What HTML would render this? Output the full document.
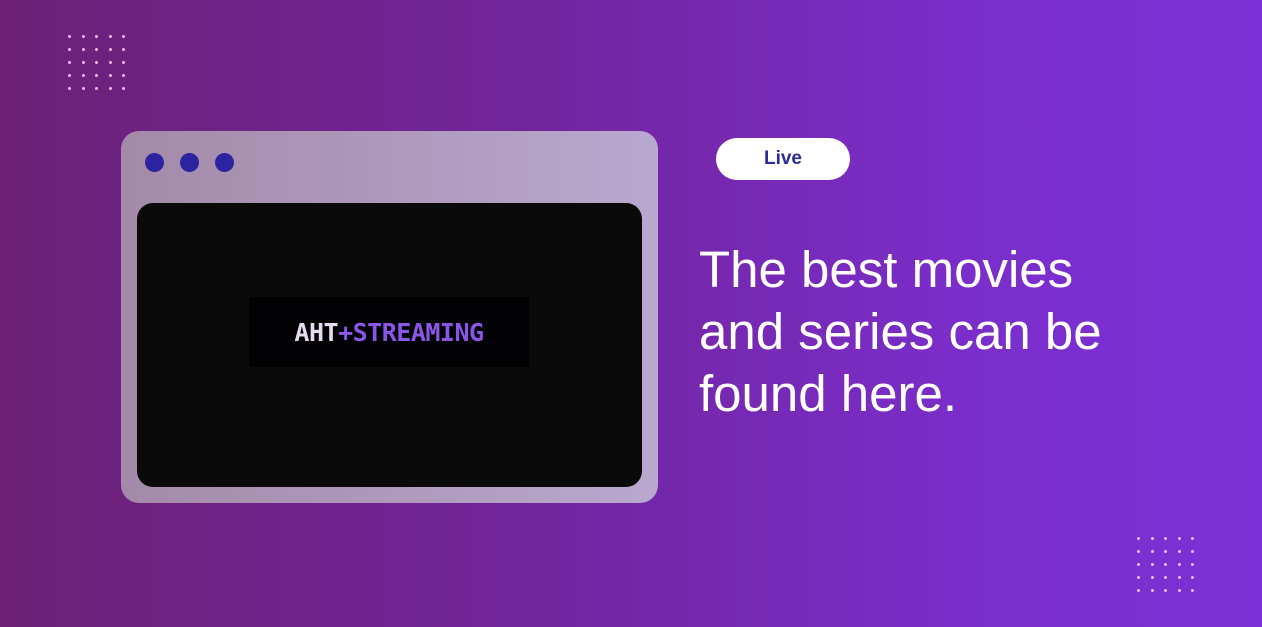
<!DOCTYPE html>
<html><head><meta charset="utf-8"><style>
html,body{margin:0;padding:0}
body{width:1262px;height:627px;overflow:hidden;position:relative;font-family:"Liberation Sans",sans-serif;
background:linear-gradient(90deg,#6c2176 0%,#72249a 40%,#7a2dc8 75%,#7c31d8 100%);}
.dots{position:absolute;display:grid;grid-template-columns:repeat(5,13.5px);grid-auto-rows:13px}
.dots i{width:3px;height:3px;border-radius:50%;background:#f0b8f0;display:block}
.win{position:absolute;left:121px;top:131px;width:537px;height:372px;border-radius:18px;
background:linear-gradient(90deg,#a48aa9,#b9a8cf)}
.d{position:absolute;top:22px;width:19px;height:19px;border-radius:50%;background:#2c23a0}
.scr{position:absolute;left:16px;top:72px;width:505px;height:284px;border-radius:16px;background:#0a0a0a}
.logo{position:absolute;left:112px;top:94px;width:280px;height:70px;background:#020204;
font:bold 25px "DejaVu Sans Mono","Liberation Mono",monospace;display:flex;align-items:center;justify-content:center;letter-spacing:-0.5px}
.live{position:absolute;left:716px;top:138px;width:134px;height:42px;border-radius:21px;background:#fff;
color:#2a2a9a;font-weight:bold;font-size:19px;text-align:center;line-height:42px}
.h{position:absolute;left:699px;top:239px;color:#fff;font-size:51px;line-height:62px}
</style></head><body>
<div class="dots" style="left:68px;top:35px"><i></i><i></i><i></i><i></i><i></i><i></i><i></i><i></i><i></i><i></i><i></i><i></i><i></i><i></i><i></i><i></i><i></i><i></i><i></i><i></i><i></i><i></i><i></i><i></i><i></i></div>
<div class="dots" style="left:1137px;top:537px"><i></i><i></i><i></i><i></i><i></i><i></i><i></i><i></i><i></i><i></i><i></i><i></i><i></i><i></i><i></i><i></i><i></i><i></i><i></i><i></i><i></i><i></i><i></i><i></i><i></i></div>
<div class="win">
<div class="d" style="left:24px"></div><div class="d" style="left:59px"></div><div class="d" style="left:94px"></div>
<div class="scr"><div class="logo"><span style="color:#e6dcf0">AHT</span><span style="color:#8a55e8">+STREAMING</span></div></div>
</div>
<div class="live">Live</div>
<div class="h">The best movies<br>and series can be<br>found here.</div>
</body></html>
